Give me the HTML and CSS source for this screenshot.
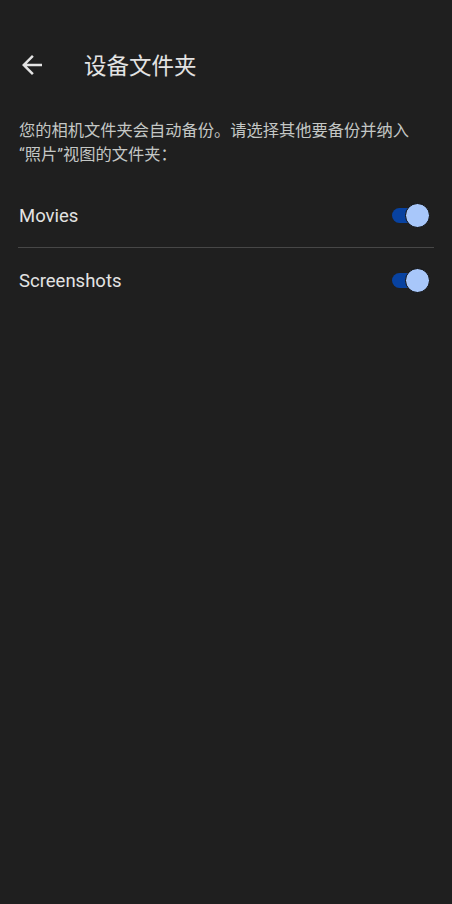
FILE: index.html
```html
<!DOCTYPE html>
<html lang="zh-CN">
<head>
<meta charset="utf-8">
<link rel="stylesheet" href="styles.css">
</head>
<body>
<div class="screen">
  <header class="topbar">
    <button class="back" aria-label="返回">
      <svg viewBox="0 0 24 24" width="30" height="30"><path d="M20 11H7.83l5.59-5.59L12 4l-8 8 8 8 1.41-1.41L7.83 13H20v-2z" fill="#e3e3e3"/></svg>
    </button>
    <h1 class="title">设备文件夹</h1>
  </header>
  <p class="desc">您的相机文件夹会自动备份。请选择其他要备份并纳入“照片”视图的文件夹：</p>
  <ul class="list">
    <li class="row">
      <span class="label">Movies</span>
      <span class="switch"><span class="track"></span><span class="thumb"></span></span>
    </li>
    <li class="row">
      <span class="label">Screenshots</span>
      <span class="switch"><span class="track"></span><span class="thumb"></span></span>
    </li>
  </ul>
</div>
</body>
</html>
```

FILE: styles.css
```css
html, body {
  margin: 0;
  padding: 0;
  background: #1f1f1f;
}
body {
  width: 452px;
  height: 904px;
  font-family: Roboto, "Noto Sans CJK SC", sans-serif;
  color: #e3e3e3;
}
.screen {
  display: flex;
  flex-direction: column;
  padding-top: 35px;
}
.topbar {
  display: flex;
  align-items: center;
  height: 58px;
  padding-left: 17px;
}
.back {
  display: flex;
  width: 30px;
  height: 30px;
  padding: 0;
  border: 0;
  background: none;
  margin-top: 1px;
}
.title {
  margin: 0 0 0 37px;
  font-family: "Noto Sans CJK SC", sans-serif;
  font-size: 22.5px;
  font-weight: 400;
  color: #e3e3e3;
  line-height: 30px;
}
.desc {
  margin: 26px 30px 0 19px;
  font-family: Roboto, "Noto Sans CJK SC", sans-serif;
  font-size: 16.25px;
  line-height: 24px;
  color: #c4c7c5;
}
.list {
  list-style: none;
  margin: 16px 18px 0 18px;
  padding: 0;
}
.row {
  display: flex;
  align-items: center;
  justify-content: space-between;
  height: 64px;
}
.row + .row {
  border-top: 1px solid #474747;
}
.label {
  font-size: 18.5px;
  color: #e3e3e3;
  padding: 2px 0 0 1px;
}
.switch {
  position: relative;
  width: 38px;
  height: 25px;
  margin-right: 4px;
}
.track {
  position: absolute;
  left: 0;
  top: 5px;
  width: 30px;
  height: 15px;
  border-radius: 8px;
  background: #0842a0;
}
.thumb {
  position: absolute;
  right: 0;
  top: 0;
  box-sizing: border-box;
  width: 25px;
  height: 25px;
  border-radius: 50%;
  background: #a8c7fa;
  border: 1px solid #0b0b0b;
}
```
